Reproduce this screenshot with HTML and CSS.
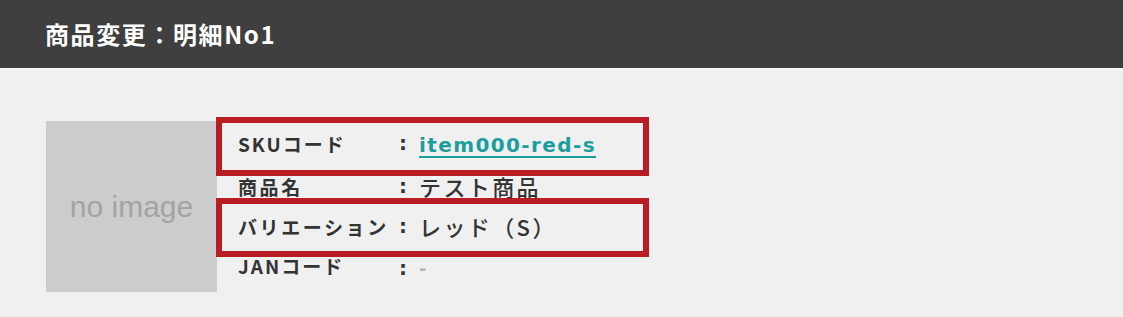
FILE: index.html
```html
<!DOCTYPE html>
<html lang="ja">
<head>
<meta charset="utf-8">
<title>商品変更</title>
<link rel="stylesheet" href="styles.css">
</head>
<body>
<header class="title-bar">
  <h1 class="title">商品変更：明細No1</h1>
</header>
<section class="detail">
  <div class="thumb">no image</div>
  <dl class="info">
    <dt class="label">SKUコード</dt>
    <dd class="colon">:</dd>
    <dd class="value"><a class="sku-link" href="#">item000-red-s</a></dd>

    <dt class="label">商品名</dt>
    <dd class="colon">:</dd>
    <dd class="value">テスト商品</dd>

    <dt class="label">バリエーション</dt>
    <dd class="colon">:</dd>
    <dd class="value">レッド（S）</dd>

    <dt class="label">JANコード</dt>
    <dd class="colon colon-low">:</dd>
    <dd class="value value-empty">-</dd>
  </dl>
  <div class="highlight highlight-sku"></div>
  <div class="highlight highlight-variation"></div>
</section>
</body>
</html>
```

FILE: styles.css
```css
html, body {
  margin: 0;
  padding: 0;
}

body {
  width: 1123px;
  height: 317px;
  overflow: hidden;
  background: #f0f0f0;
  font-family: "Noto Sans CJK JP", "Noto Sans", sans-serif;
  color: #333333;
}

.title-bar {
  height: 68px;
  background: #3f3f3f;
  display: flex;
  align-items: center;
  padding-left: 45px;
  border-bottom: 2px solid #f8f8f8;
}

.title {
  margin: 0;
  font-size: 24px;
  font-weight: 700;
  color: #ffffff;
  letter-spacing: 1.6px;
  line-height: 1;
}

.detail {
  position: relative;
  display: flex;
  align-items: flex-start;
  gap: 21px;
  padding: 51px 46px 0;
}

.thumb {
  width: 171px;
  height: 171px;
  flex: none;
  background: #cccccc;
  color: #a3a3a3;
  font-family: "Liberation Sans", Arial, sans-serif;
  font-size: 30px;
  display: flex;
  align-items: center;
  justify-content: center;
}

.info {
  margin: 0;
  display: grid;
  grid-template-columns: 161px 20px auto;
  grid-template-rows: 44px 42px 38px 40px;
  align-items: center;
}

.label {
  font-size: 19px;
  font-weight: 700;
  letter-spacing: 2.6px;
  color: #333333;
  line-height: 1;
}

.label:first-of-type,
.label:last-of-type {
  letter-spacing: 2px;
}

.colon {
  margin: 0;
  font-family: "DejaVu Sans", sans-serif;
  font-size: 20px;
  font-weight: 700;
  color: #333333;
  line-height: 1;
}

.colon-low {
  padding-top: 6px;
}

.value {
  margin: 0;
  font-size: 22px;
  font-weight: 500;
  letter-spacing: 2.4px;
  color: #333333;
  line-height: 1;
}

.sku-link {
  font-family: "DejaVu Sans", "Noto Sans CJK JP", sans-serif;
  font-size: 20px;
  font-weight: 700;
  letter-spacing: 1.4px;
  color: #1c9e9e;
  text-decoration: underline;
  text-decoration-thickness: 2px;
  text-underline-offset: 4px;
}

.value-empty {
  font-family: "DejaVu Sans", sans-serif;
  font-size: 18px;
  font-weight: 700;
  color: #b4b4b4;
  padding-top: 8px;
}

.highlight {
  position: absolute;
  left: 216px;
  width: 421px;
  height: 47px;
  border: 6px solid #b81d24;
}

.highlight-sku {
  top: 47px;
}

.highlight-variation {
  top: 128px;
}
```
